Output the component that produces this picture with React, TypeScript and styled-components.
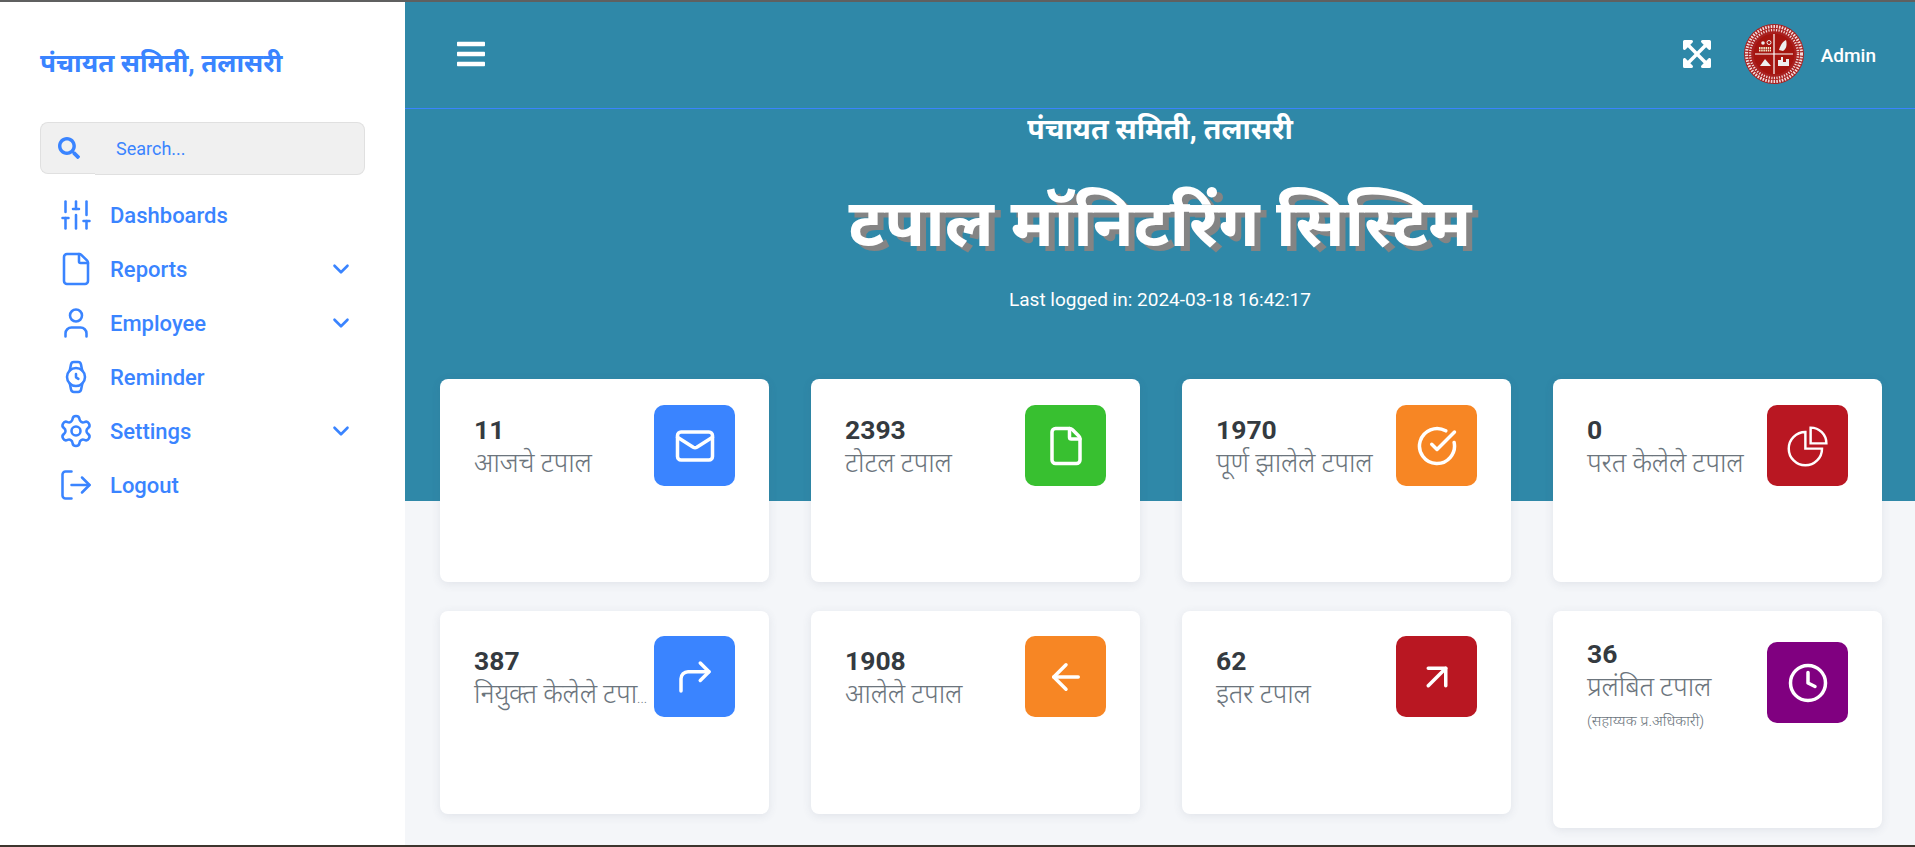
import React, { FC } from 'react';
import styled, { createGlobalStyle } from 'styled-components';
import {
	ArrowLeft,
	ArrowUpRight,
	ChevronDown,
	CircleCheckBig,
	Clock,
	CornerUpRight,
	File,
	LogOut,
	Mail,
	Settings,
	SlidersVertical,
	User,
	Watch,
} from 'lucide-react';
import { FaBars, FaExpandArrowsAlt, FaSearch } from 'react-icons/fa';

const GlobalStyle = createGlobalStyle`
	html, body {
		margin: 0;
		padding: 0;
		background: #f4f6f9;
		font-family: Roboto, "Noto Sans", "Noto Sans Devanagari", sans-serif;
	}
	* {
		box-sizing: border-box;
	}
`;

const Page = styled.div`
	display: flex;
	flex-direction: column;
	width: 1915px;
	height: 847px;
	overflow: hidden;
`;

const TopEdge = styled.div`
	flex: 0 0 2px;
	background: #5f6060;
`;

const BottomEdge = styled.div`
	flex: 0 0 2px;
	background: #3d352e;
`;

const Body = styled.div`
	flex: 1;
	display: flex;
	min-height: 0;
`;

const Sidebar = styled.aside`
	flex: 0 0 405px;
	background: #fff;
	padding: 44px 40px 0;
`;

const Brand = styled.div`
	height: 34px;
	font-size: 26px;
	line-height: 34px;
	font-weight: 700;
	color: #3a84ff;
	white-space: nowrap;
`;

const SearchBox = styled.div`
	display: flex;
	align-items: flex-start;
	width: 325px;
	height: 53px;
	margin-top: 42px;
`;

const SearchIcon = styled.div`
	flex: 0 0 55px;
	display: flex;
	align-items: center;
	height: 52px;
	padding-left: 17px;
	color: #3a84ff;
	font-size: 22px;
	background: #f0f0f0;
	border: 1px solid #e0e0e0;
	border-right: 0;
	border-radius: 8px 0 0 8px;
`;

const SearchText = styled.div`
	flex: 1;
	display: flex;
	align-items: center;
	height: 53px;
	padding-left: 21px;
	font-size: 18px;
	color: #3a84ff;
	background: #f0f0f0;
	border: 1px solid #e0e0e0;
	border-left: 0;
	border-radius: 0 8px 8px 0;
`;

const Menu = styled.nav`
	display: flex;
	flex-direction: column;
	margin-top: 13px;
`;

const MenuRow = styled.div`
	display: flex;
	align-items: center;
	height: 54px;
	padding-left: 18px;
	color: #3a84ff;
`;

const MenuIcon = styled.span`
	flex: 0 0 36px;
	display: flex;
	justify-content: center;
	margin-right: 16px;
`;

const MenuLabel = styled.span`
	flex: 1;
	font-size: 22px;
	font-weight: 500;
`;

const MenuCaret = styled.span`
	display: flex;
	margin-right: 11px;
`;

const Main = styled.main`
	flex: 1;
	display: flex;
	flex-direction: column;
	min-width: 0;
	background: #f4f6f9;
`;

const Hero = styled.section`
	flex: 0 0 499px;
	background: #2f88a8;
	color: #fff;
`;

const TopBar = styled.header`
	display: flex;
	align-items: center;
	height: 107px;
	padding: 0 39px 0 50px;
	border-bottom: 1px solid #3a84ff;
`;

const MenuButton = styled.div`
	display: flex;
	font-size: 32px;
	margin-top: -2px;
`;

const TopRight = styled.div`
	display: flex;
	align-items: center;
	margin-left: auto;
`;

const Expand = styled.div`
	display: flex;
	font-size: 32px;
	margin-right: 31px;
	margin-top: -2px;
`;

const Avatar = styled.svg`
	width: 60px;
	height: 60px;
	margin-right: 17px;
	margin-top: -2px;
`;

const AdminName = styled.span`
	font-size: 19px;
	font-weight: 500;
`;

const HeroText = styled.div`
	text-align: center;
`;

const Subtitle = styled.h2`
	margin: 2px 0 0;
	font-size: 28.5px;
	line-height: 38px;
	font-weight: 700;
`;

const Title = styled.h1`
	margin: 29px 0 0;
	font-size: 66.5px;
	line-height: 90px;
	font-weight: 700;
	text-shadow: 6px 5px 0 #848484;
`;

const LastLogin = styled.p`
	margin: 20px 0 0;
	font-size: 19px;
	line-height: 24px;
`;

const CardGrid = styled.div`
	display: grid;
	grid-template-columns: repeat(4, 329px);
	column-gap: 42px;
	row-gap: 29px;
	align-items: start;
	margin-top: -122px;
	padding-left: 35px;
`;

const Card = styled.article<{ $top: number; $tall?: boolean }>`
	display: flex;
	justify-content: space-between;
	align-items: flex-start;
	height: ${(p) => (p.$tall ? 217 : 203)}px;
	padding: ${(p) => p.$top}px 34px 0 34px;
	background: #fff;
	border-radius: 8px;
	box-shadow: 0 2px 10px rgba(60, 70, 100, 0.1);
`;

const CardText = styled.div<{ $tall?: boolean }>`
	min-width: 0;
	flex: 1;
	margin-top: ${(p) => (p.$tall ? -4 : 9)}px;
`;

const Count = styled.div`
	font-size: 26.5px;
	line-height: 32px;
	font-weight: 700;
	color: #343a40;
`;

const CardLabel = styled.div`
	font-size: 27px;
	line-height: 34px;
	font-weight: 300;
	letter-spacing: -0.25px;
	color: #6c757d;
	white-space: nowrap;
`;

// narrow dots, as the cut-off label in the reference has
const Dots = styled.span`
	font-size: 14px;
	letter-spacing: 0;
`;

const CardNote = styled.div`
	margin-top: 8px;
	font-size: 15px;
	line-height: 18px;
	font-weight: 300;
	color: #6c757d;
`;

const IconBox = styled.div<{ $bg: string }>`
	flex: 0 0 81px;
	display: flex;
	align-items: center;
	justify-content: center;
	height: 81px;
	border-radius: 10px;
	background: ${(p) => p.$bg};
	color: #fff;
`;

const Emblem: FC = () => (
	<Avatar viewBox="0 0 60 60">
		<circle cx="30" cy="30" r="30" fill="#a9201f" />
		<circle cx="30" cy="30" r="27.5" fill="none" stroke="#f3dcdc" strokeWidth="3" strokeDasharray="1.6 1.2" />
		<circle cx="30" cy="30" r="24" fill="none" stroke="#f3dcdc" strokeWidth="2.4" strokeDasharray="1.2 1.4" />
		<circle cx="30" cy="30" r="20.5" fill="#a5140f" />
		<path d="M30 10v40M11 30h38" stroke="#fff" strokeWidth="1.2" />
		<path d="M15 24h12M15 26.5h12" stroke="#eec" strokeWidth="1.8" strokeDasharray="1.5 .7" />
		<circle cx="19" cy="19" r="1.8" fill="#eee" />
		<circle cx="25" cy="18.5" r="2" fill="none" stroke="#eee" />
		<path d="M35 26c2-7 5-9 7-10 1 3 1 9-3 11z" fill="#eee" />
		<path d="M16 42l5-7 6 7z" fill="#eee" />
		<path d="M34 42v-6h3v-3h2v5h3v-3h3v7z" fill="#eee" />
	</Avatar>
);

// the pie in the reference is a thin outline with the quarter pulled out
const PieIcon: FC<{ size: number }> = ({ size }) => (
	<svg width={size} height={size} viewBox="0 0 24 24" fill="none" stroke="currentColor" strokeWidth="1.4">
		<path d="M10.5 4a9.5 9.5 0 1 0 9.5 9.5h-9.5z" />
		<path d="M13.5 1.5a9 9 0 0 1 9 9h-9z" />
	</svg>
);

interface IIconProps {
	size: number;
	strokeWidth?: number;
}

interface INavItem {
	label: string;
	icon: FC<IIconProps>;
	caret?: boolean;
}

const navItems: INavItem[] = [
	{ label: 'Dashboards', icon: SlidersVertical },
	{ label: 'Reports', icon: File, caret: true },
	{ label: 'Employee', icon: User, caret: true },
	{ label: 'Reminder', icon: Watch },
	{ label: 'Settings', icon: Settings, caret: true },
	{ label: 'Logout', icon: LogOut },
];

interface IStat {
	count: string;
	label: string;
	cut?: boolean;
	note?: string;
	color: string;
	icon: FC<IIconProps>;
	top: number;
}

const stats: IStat[] = [
	{ count: '11', label: 'आजचे टपाल', color: '#3a84ff', icon: Mail, top: 26 },
	{ count: '2393', label: 'टोटल टपाल', color: '#38c030', icon: File, top: 26 },
	{ count: '1970', label: 'पूर्ण झालेले टपाल', color: '#f78624', icon: CircleCheckBig, top: 26 },
	{ count: '0', label: 'परत केलेले टपाल', color: '#b91722', icon: PieIcon, top: 26 },
	{ count: '387', label: 'नियुक्त केलेले टपा', cut: true, color: '#3a84ff', icon: CornerUpRight, top: 25 },
	{ count: '1908', label: 'आलेले टपाल', color: '#f78624', icon: ArrowLeft, top: 25 },
	{ count: '62', label: 'इतर टपाल', color: '#b91722', icon: ArrowUpRight, top: 25 },
	{ count: '36', label: 'प्रलंबित टपाल', note: '(सहाय्यक प्र.अधिकारी)', color: '#800080', icon: Clock, top: 31 },
];

const App: FC = () => (
	<Page>
		<GlobalStyle />
		<TopEdge />
		<Body>
			<Sidebar>
				<Brand>पंचायत समिती, तलासरी</Brand>
				<SearchBox>
					<SearchIcon>
						<FaSearch />
					</SearchIcon>
					<SearchText>Search...</SearchText>
				</SearchBox>
				<Menu>
					{navItems.map(({ label, icon: Icon, caret }) => (
						<MenuRow key={label}>
							<MenuIcon>
								<Icon size={36} strokeWidth={1.7} />
							</MenuIcon>
							<MenuLabel>{label}</MenuLabel>
							{caret && (
								<MenuCaret>
									<ChevronDown size={26} strokeWidth={2.4} />
								</MenuCaret>
							)}
						</MenuRow>
					))}
				</Menu>
			</Sidebar>
			<Main>
				<Hero>
					<TopBar>
						<MenuButton>
							<FaBars />
						</MenuButton>
						<TopRight>
							<Expand>
								<FaExpandArrowsAlt />
							</Expand>
							<Emblem />
							<AdminName>Admin</AdminName>
						</TopRight>
					</TopBar>
					<HeroText>
						<Subtitle>पंचायत समिती, तलासरी</Subtitle>
						<Title>टपाल मॉनिटरिंग सिस्टिम</Title>
						<LastLogin>Last logged in: 2024-03-18 16:42:17</LastLogin>
					</HeroText>
				</Hero>
				<CardGrid>
					{stats.map(({ count, label, cut, note, color, icon: Icon, top }) => (
						<Card key={count} $top={top} $tall={!!note}>
							<CardText $tall={!!note}>
								<Count>{count}</Count>
								<CardLabel>
									{label}
									{cut && <Dots>...</Dots>}
								</CardLabel>
								{note && <CardNote>{note}</CardNote>}
							</CardText>
							<IconBox $bg={color}>
								<Icon size={42} strokeWidth={2} />
							</IconBox>
						</Card>
					))}
				</CardGrid>
			</Main>
		</Body>
		<BottomEdge />
	</Page>
);

export default App;
